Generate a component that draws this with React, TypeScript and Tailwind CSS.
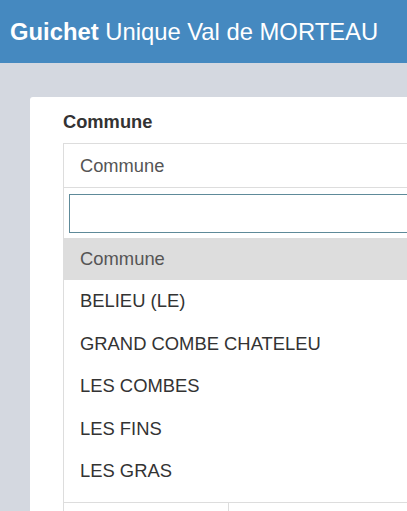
import React from 'react';

const COMMUNES = [
  'BELIEU (LE)',
  'GRAND COMBE CHATELEU',
  'LES COMBES',
  'LES FINS',
  'LES GRAS',
];

export default function App() {
  return (
    <div
      className="h-[511px] w-[407px] overflow-hidden bg-[#d4d8e0]"
      style={{ fontFamily: '"Liberation Sans", Arial, sans-serif' }}
    >
      {/* Barre de titre */}
      <header className="flex h-[63px] items-center bg-[#4589c0] pl-[10px] text-[23.8px] leading-none text-white">
        <span className="font-bold">Guichet</span>
        <span>&nbsp;Unique Val de MORTEAU</span>
      </header>

      <div className="pl-[30px] pt-[34px]">
        <div className="w-[420px] rounded-[3px] bg-white pl-[33px] pt-[13px]">
          <label className="mb-[9px] block h-[24px] text-[18.3px] font-bold leading-[24px] text-[#333]">
            Commune
          </label>

          {/* Select */}
          <div className="w-[400px]">
            <div className="flex h-[45px] items-center border border-[#ddd] px-[16px] text-[18.3px] text-[#555]">
              Commune
            </div>
            <div className="border-x border-b border-[#ddd] pb-[10px]">
              <div className="px-[5px] pt-[6px] pb-[5px]">
                <input
                  type="text"
                  className="block h-[39px] w-full border border-[#5e8a99] bg-white outline-none"
                />
              </div>
              <ul className="text-[18.4px]">
                <li className="flex h-[42px] items-center bg-[#dddddd] px-[16px] text-[#555]">Commune</li>
                {COMMUNES.map((c) => (
                  <li key={c} className="flex h-[42.4px] items-center px-[16px] text-[#333]">
                    {c}
                  </li>
                ))}
              </ul>
            </div>
            {/* contenu sous la liste */}
            <div className="flex h-[10px] border-l border-[#ddd]">
              <div className="w-[165px] border-r border-[#ddd]"></div>
            </div>
          </div>
        </div>
      </div>
    </div>
  );
}
